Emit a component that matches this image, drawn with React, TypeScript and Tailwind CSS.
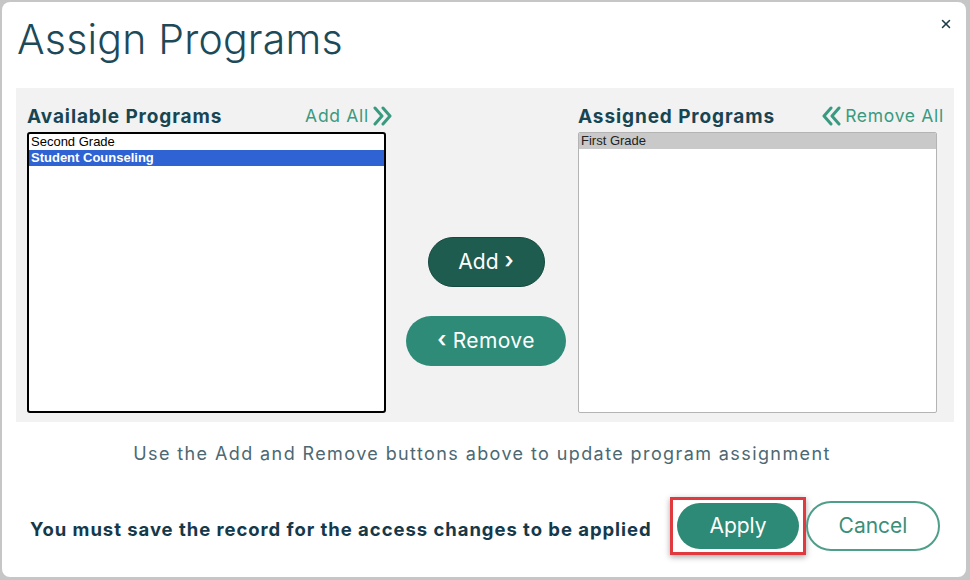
import { X } from 'lucide-react';

const available = ['Second Grade', 'Student Counseling'];
const assigned = ['First Grade'];

// Heavy double chevron used by the "Add All" / "Remove All" links
function DoubleChevron({ dir }: { dir: 'left' | 'right' }) {
  const d = dir === 'right' ? 'M3 2l7 8-7 8M11 2l7 8-7 8' : 'M19 2l-7 8 7 8M11 2l-7 8 7 8';
  return (
    <svg width="22" height="20" viewBox="0 0 22 20" fill="none" stroke="currentColor" strokeWidth="3" strokeLinecap="round" strokeLinejoin="round">
      <path d={d} />
    </svg>
  );
}

function ProgramList({
  items,
  selected,
  variant,
}: {
  items: string[];
  selected: string;
  variant: 'focus' | 'idle';
}) {
  const box =
    variant === 'focus'
      ? 'border-2 border-black rounded-[3px]'
      : 'border border-[#b4b4b4] rounded-[2px]';
  return (
    <div className={`h-[281px] bg-white overflow-hidden ${box}`}>
      {items.map((item) => {
        const isSel = item === selected;
        const selClass =
          variant === 'focus' ? 'bg-[#2f62d2] text-white font-bold' : 'bg-[#c9c9c9] text-[#222]';
        return (
          <div
            key={item}
            className={`h-[16px] px-[2px] text-[13px] leading-[16px] font-['Liberation_Sans',Arial,sans-serif] ${
              isSel ? selClass : 'text-black'
            }`}
          >
            {item}
          </div>
        );
      })}
    </div>
  );
}

export default function App() {
  return (
    <div className="w-[970px] h-[580px] bg-[#c6c6c6] pt-[2px] pl-[2px] pr-[4px] pb-[3px] font-['Inter',sans-serif]">
      <div className="h-full bg-white rounded-[8px] flex flex-col relative">
        <button className="absolute right-[13px] top-[15px] text-[#1d3a48]">
          <X size={14} strokeWidth={2.6} />
        </button>

        <div className="h-[86px] pl-[15px] pt-[13px]">
          <h1 className="text-[41px] leading-[48px] font-light text-[#1c4a59] tracking-[0.2px]">Assign Programs</h1>
        </div>

        <div className="ml-[14px] mr-[12px] h-[334px] bg-[#f2f2f2] pl-[11px] pr-[17px] flex">
          <div className="w-[359px] flex flex-col">
            <div className="h-[44px] flex items-end justify-between pb-[6px]">
              <span className="text-[19px] font-bold text-[#174552] leading-none tracking-[0.9px]">Available Programs</span>
              <span className="flex items-center gap-[3px] text-[17.5px] text-[#3a9a80] leading-none -mr-[8px] tracking-[0.7px]">
                Add All
                <DoubleChevron dir="right" />
              </span>
            </div>
            <ProgramList items={available} selected="Student Counseling" variant="focus" />
          </div>

          <div className="flex-1 flex flex-col items-center pt-[149px] gap-[29px] pl-[8px]">
            <button className="w-[117px] h-[50px] rounded-full bg-[#1f5c50] border border-[#164a40] text-white text-[21px] flex items-center justify-center gap-[6px]">
              Add <span className="text-[22px] font-semibold -mt-[3px]">›</span>
            </button>
            <button className="w-[160px] h-[50px] rounded-full bg-[#2e8b78] text-white text-[21px] tracking-[0.4px] flex items-center justify-center gap-[6px]">
              <span className="text-[22px] font-semibold -mt-[3px]">‹</span> Remove
            </button>
          </div>

          <div className="w-[359px] flex flex-col">
            <div className="h-[44px] flex items-end justify-between pb-[6px]">
              <span className="text-[19px] font-bold text-[#174552] leading-none tracking-[0.9px]">Assigned Programs</span>
              <span className="flex items-center gap-[3px] text-[17.5px] text-[#3a9a80] leading-none -mr-[7px] tracking-[0.7px]">
                <DoubleChevron dir="left" />
                Remove All
              </span>
            </div>
            <ProgramList items={assigned} selected="First Grade" variant="idle" />
          </div>
        </div>

        <p className="mt-[18px] text-center text-[18px] text-[#4c6872] tracking-[1.4px] pr-[4px]">
          Use the Add and Remove buttons above to update program assignment
        </p>

        <div className="mt-[30px] flex items-center pl-[28px] pr-[26px]">
          <span className="flex-1 text-[18.5px] font-bold text-[#15394a] tracking-[0.95px] mt-[8px]">
            You must save the record for the access changes to be applied
          </span>
          <div className="border-[3px] border-[#e0393e] py-[3px] px-[4px] shadow-[0_2px_6px_rgba(0,0,0,0.35)]">
            <button className="w-[122px] h-[46px] rounded-full bg-[#2c8a76] text-white text-[21px]">Apply</button>
          </div>
          <button className="w-[134px] h-[50px] rounded-full border-2 border-[#4e9e8a] bg-white text-[#3a8f7b] text-[21px]">
            Cancel
          </button>
        </div>
      </div>
    </div>
  );
}
